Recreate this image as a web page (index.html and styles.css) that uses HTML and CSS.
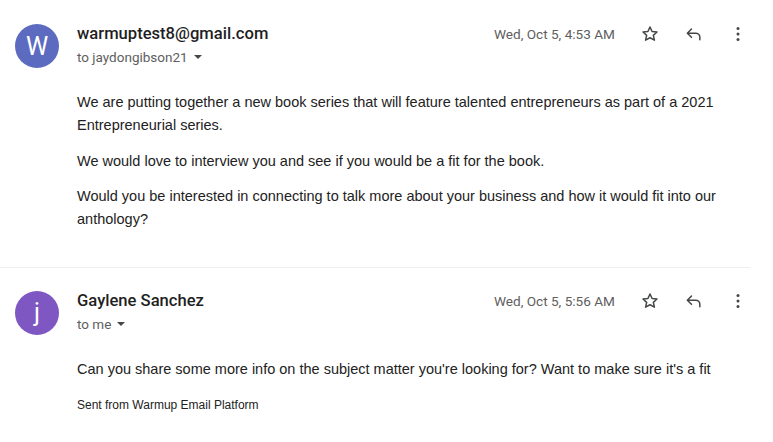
FILE: index.html
```html
<!DOCTYPE html>
<html>
<head>
<meta charset="utf-8">
<link rel="stylesheet" href="styles.css">
</head>
<body>
<div class="thread">
  <div class="msg first">
    <div class="avatar blue">W</div>
    <div class="content">
      <div class="header">
        <div class="who">
          <div class="name">warmuptest8@gmail.com</div>
          <div class="to">to jaydongibson21 <span class="caret"></span></div>
        </div>
        <div class="meta">
          <span class="date">Wed, Oct 5, 4:53 AM</span>
          <span class="icon star"><svg viewBox="0 0 24 24" width="20" height="20"><path d="M12 3.6l2.5 5.4 5.9.6-4.4 4 1.3 5.8L12 16.5l-5.3 2.9L8 13.6l-4.4-4 5.9-.6z" fill="none" stroke="#444746" stroke-width="1.8" stroke-linejoin="round"/></svg></span>
          <span class="icon reply"><svg viewBox="0 0 24 24" width="20" height="20"><path d="M9 6L4 11l5 5M4.5 11H14a5 5 0 0 1 5 5v3" fill="none" stroke="#444746" stroke-width="1.8" stroke-linecap="round" stroke-linejoin="round"/></svg></span>
          <span class="icon more"><svg viewBox="0 0 24 24" width="20" height="20"><circle cx="12" cy="5.5" r="1.8" fill="#444746"/><circle cx="12" cy="12" r="1.8" fill="#444746"/><circle cx="12" cy="18.5" r="1.8" fill="#444746"/></svg></span>
        </div>
      </div>
      <div class="body">
        <p>We are putting together a new book series that will feature talented entrepreneurs as part of a 2021 Entrepreneurial series.</p>
        <p>We would love to interview you and see if you would be a fit for the book.</p>
        <p>Would you be interested in connecting to talk more about your business and how it would fit into our anthology?</p>
      </div>
    </div>
  </div>
  <div class="sep"></div>
  <div class="msg second">
    <div class="avatar purple">j</div>
    <div class="content">
      <div class="header">
        <div class="who">
          <div class="name">Gaylene Sanchez</div>
          <div class="to">to me <span class="caret"></span></div>
        </div>
        <div class="meta">
          <span class="date">Wed, Oct 5, 5:56 AM</span>
          <span class="icon star"><svg viewBox="0 0 24 24" width="20" height="20"><path d="M12 3.6l2.5 5.4 5.9.6-4.4 4 1.3 5.8L12 16.5l-5.3 2.9L8 13.6l-4.4-4 5.9-.6z" fill="none" stroke="#444746" stroke-width="1.8" stroke-linejoin="round"/></svg></span>
          <span class="icon reply"><svg viewBox="0 0 24 24" width="20" height="20"><path d="M9 6L4 11l5 5M4.5 11H14a5 5 0 0 1 5 5v3" fill="none" stroke="#444746" stroke-width="1.8" stroke-linecap="round" stroke-linejoin="round"/></svg></span>
          <span class="icon more"><svg viewBox="0 0 24 24" width="20" height="20"><circle cx="12" cy="5.5" r="1.8" fill="#444746"/><circle cx="12" cy="12" r="1.8" fill="#444746"/><circle cx="12" cy="18.5" r="1.8" fill="#444746"/></svg></span>
        </div>
      </div>
      <div class="body">
        <p>Can you share some more info on the subject matter you're looking for? Want to make sure it's a fit</p>
        <p class="sig">Sent from Warmup Email Platform</p>
      </div>
    </div>
  </div>
</div>
</body>
</html>
```

FILE: styles.css
```css
html, body {
  margin: 0;
  padding: 0;
  background: #ffffff;
}
.thread {
  width: 773px;
}
.msg {
  display: flex;
  padding-left: 15px;
}
.msg.first {
  padding-top: 24px;
  padding-bottom: 23px;
}
.msg.second {
  padding-top: 23px;
}
.avatar {
  width: 44px;
  height: 44px;
  border-radius: 50%;
  color: #fff;
  font-family: Roboto, "Liberation Sans", sans-serif;
  font-size: 25px;
  display: flex;
  align-items: center;
  justify-content: center;
  flex-shrink: 0;
  margin-right: 18px;
}
.blue { background: #5c6bc0; }
.purple { background: #7e57c2; }
.content {
  flex: 1;
}
.header {
  display: flex;
  justify-content: space-between;
  align-items: flex-start;
}
.name {
  font-family: Roboto, "Liberation Sans", sans-serif;
  font-weight: 500;
  font-size: 16.6px;
  color: #1f1f1f;
  line-height: 20px;
}
.to {
  font-family: Roboto, "Liberation Sans", sans-serif;
  font-size: 13.5px;
  color: #5e5e5e;
  line-height: 16px;
  margin-top: 5px;
  display: flex;
  align-items: center;
  gap: 6px;
}
.caret {
  display: inline-block;
  width: 0;
  height: 0;
  border-left: 4.5px solid transparent;
  border-right: 4.5px solid transparent;
  border-top: 4.5px solid #444746;
}
.meta {
  display: flex;
  align-items: center;
  margin-right: 25px;
}
.date {
  font-family: Roboto, "Liberation Sans", sans-serif;
  font-size: 13.6px;
  color: #5e5e5e;
  margin-right: 25px;
}
.icon {
  display: flex;
  width: 20px;
  height: 20px;
}
.star { margin-right: 24px; }
.reply { margin-right: 24px; }
.body {
  font-family: "Liberation Sans", Arial, sans-serif;
  font-size: 14.5px;
  color: #222222;
  line-height: 23px;
  padding-top: 26px;
  padding-right: 40px;
}
.body p {
  margin: 0 0 12.5px 0;
}
.body p.sig {
  font-size: 12px;
  line-height: 16px;
  margin-top: 16.5px;
}
.sep {
  width: 750px;
  height: 1px;
  background: #eeeeee;
}
```
